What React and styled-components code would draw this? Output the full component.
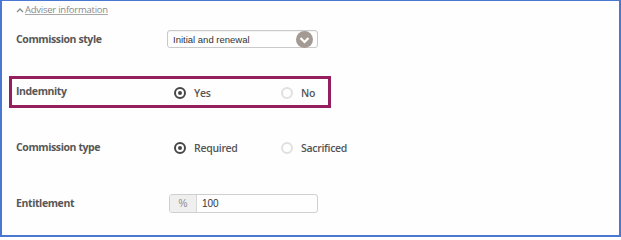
import React from 'react';
import styled, { createGlobalStyle } from 'styled-components';

const GlobalStyle = createGlobalStyle`
  body {
    margin: 0;
    background: #ffffff;
    font-family: 'Open Sans', 'Liberation Sans', sans-serif;
  }
`;

const Frame = styled.div`
  width: 621px;
  height: 237px;
  box-sizing: border-box;
  border: 2px solid #4a78d0;
  border-top-width: 1px;
  background: #fefefe;
  padding: 3px 0 0 7px;
  display: flex;
  flex-direction: column;
`;

const ToggleLink = styled.a`
  display: inline-flex;
  align-items: center;
  gap: 1px;
  margin-left: 7px;
  width: fit-content;
  font-size: 9.5px;
  line-height: 11px;
  color: #8a8a8a;
  text-decoration: underline;
  text-decoration-color: #a8a8a8;
  text-underline-offset: 1px;
  letter-spacing: -0.25px;
`;

const Row = styled.div`
  width: 322px;
  height: 32px;
  box-sizing: border-box;
  margin-top: ${(p) => p.$mt}px;
  border: 3px solid ${(p) => (p.$highlight ? '#951e5f' : 'transparent')};
  padding-left: 4px;
  display: grid;
  grid-template-columns: 151px 1fr;
  align-items: center;
`;

const Label = styled.div`
  font-size: 10.5px;
  font-weight: 700;
  color: #575757;
  letter-spacing: -0.4px;
  margin-top: ${(p) => p.$dy || 0}px;
`;

const Select = styled.div`
  width: 151px;
  height: 18px;
  box-sizing: border-box;
  border: 1px solid #c9c9c9;
  border-radius: 3px;
  display: flex;
  align-items: center;
  justify-content: space-between;
  padding: 0 4px 0 5px;
  font-family: 'Liberation Sans', Arial, sans-serif;
  font-size: 9.5px;
  color: #333;
  box-shadow: inset 0 1px 1px rgba(0, 0, 0, 0.05);
`;

const Radios = styled.div`
  display: flex;
  align-items: center;
  margin-left: 7px;
  margin-top: ${(p) => p.$dy || 0}px;
`;

const Option = styled.div`
  width: 107px;
  display: flex;
  align-items: center;
  gap: 8px;
  font-size: 10.5px;
  font-weight: 600;
  color: #555;
  letter-spacing: -0.3px;
`;

const Dot = styled.span`
  width: 12px;
  height: 12px;
  box-sizing: border-box;
  border-radius: 50%;
  border: 2px solid ${(p) => (p.$on ? '#474747' : '#e0e0e0')};
  display: flex;
  align-items: center;
  justify-content: center;
  &::after {
    content: '';
    width: 4px;
    height: 4px;
    border-radius: 50%;
    background: ${(p) => (p.$on ? '#474747' : 'transparent')};
  }
`;

const InputGroup = styled.div`
  width: 149px;
  height: 19px;
  box-sizing: border-box;
  margin-left: 2px;
  border: 1px solid #cfcfcf;
  border-radius: 3px;
  display: flex;
  overflow: hidden;
  font-family: 'Liberation Sans', Arial, sans-serif;
  font-size: 10px;
`;

const Addon = styled.span`
  width: 26px;
  background: #efefef;
  border-right: 1px solid #d6d6d6;
  color: #8a8a8a;
  display: flex;
  align-items: center;
  justify-content: center;
`;

const Value = styled.span`
  padding-left: 5px;
  color: #333;
  display: flex;
  align-items: center;
`;

const Chevron = ({ up }) => (
  <svg width="8" height="6" viewBox="0 0 8 6">
    <path d={up ? 'M1 5 L4 2 L7 5' : 'M1 1 L4 4 L7 1'} fill="none" stroke="currentColor" strokeWidth="1.3" />
  </svg>
);

const SelectArrow = () => (
  <svg width="17" height="17" viewBox="0 0 17 17">
    <circle cx="8.5" cy="8.5" r="8.5" fill="#a39a93" />
    <path d="M4.5 7 L8.5 11 L12.5 7" fill="none" stroke="#fff" strokeWidth="2.2" />
  </svg>
);

const RadioGroup = ({ options, selected, dy }) => (
  <Radios $dy={dy}>
    {options.map((o) => (
      <Option key={o}>
        <Dot $on={o === selected} />
        {o}
      </Option>
    ))}
  </Radios>
);

export default function App() {
  return (
    <>
      <GlobalStyle />
      <Frame>
        <ToggleLink>
          <Chevron up />
          Adviser information
        </ToggleLink>
        <Row $mt={8}>
          <Label>Commission style</Label>
          <Select>
            Initial and renewal
            <SelectArrow />
          </Select>
        </Row>
        <Row $mt={21} $highlight>
          <Label $dy={-3}>Indemnity</Label>
          <RadioGroup options={['Yes', 'No']} selected="Yes" dy={1} />
        </Row>
        <Row $mt={24}>
          <Label $dy={-2}>Commission type</Label>
          <RadioGroup options={['Required', 'Sacrificed']} selected="Required" />
        </Row>
        <Row $mt={23}>
          <Label>Entitlement</Label>
          <InputGroup>
            <Addon>%</Addon>
            <Value>100</Value>
          </InputGroup>
        </Row>
      </Frame>
    </>
  );
}
